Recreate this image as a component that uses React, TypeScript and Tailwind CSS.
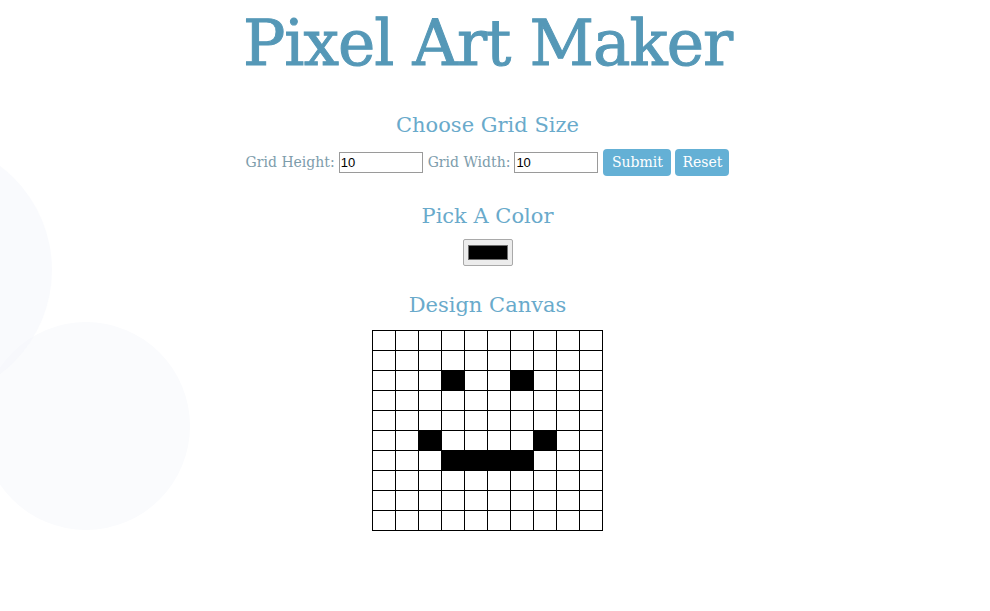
import { useState } from "react";

const ROWS = 10;
const COLS = 10;
const FILLED = new Set(["2-3", "2-6", "5-2", "5-7", "6-3", "6-4", "6-5", "6-6"]);

export default function App() {
  const [color, setColor] = useState("#000000");
  const [cells, setCells] = useState<Set<string>>(FILLED);

  const paint = (key: string) => {
    const next = new Set(cells);
    next.add(key);
    setCells(next);
  };

  return (
    <div className="relative h-[611px] w-[975px] overflow-hidden bg-white font-['DejaVu_Serif',serif]">
      {/* faint background blobs */}
      <div className="absolute left-[-18px] top-[322px] h-[208px] w-[208px] rounded-full bg-[#fafbfd]" />
      <div className="absolute left-[-208px] top-[140px] h-[260px] w-[260px] rounded-full bg-[#f4f6fb] opacity-50" />

      <div className="relative flex flex-col items-center">
        <h1 className="mt-[4px] text-[63px] leading-[80px] tracking-[-1px] text-[#5598b7] [-webkit-text-stroke:1px_#5598b7]">
          Pixel Art Maker
        </h1>

        <h2 className="mt-[26px] text-[21px] leading-[30px] text-[#69aacb]">Choose Grid Size</h2>
        <form className="mt-[9px] flex items-center text-[14px] text-[#7d9cab]" onSubmit={(e) => e.preventDefault()}>
          <label className="mr-[4px]">Grid Height:</label>
          <input
            defaultValue="10"
            className="h-[21px] w-[84px] border border-[#9a9a9a] px-[1px] font-['Liberation_Sans',sans-serif] text-[13px] text-black"
          />
          <label className="ml-[5px] mr-[4px]">Grid Width:</label>
          <input
            defaultValue="10"
            className="h-[21px] w-[84px] border border-[#9a9a9a] px-[1px] font-['Liberation_Sans',sans-serif] text-[13px] text-black"
          />
          <button className="ml-[5px] h-[27px] w-[68px] rounded-[4px] bg-[#64b0d5] text-[14px] text-white">Submit</button>
          <button type="reset" className="ml-[4px] h-[27px] w-[54px] rounded-[4px] bg-[#64b0d5] text-[14px] text-white">Reset</button>
        </form>

        <h2 className="mt-[25px] text-[21px] leading-[30px] text-[#69aacb]">Pick A Color</h2>
        <label className="mt-[8px] flex h-[27px] w-[50px] items-center justify-center rounded-[2px] border border-[#a9a9a9] bg-[#ececec]">
          <span className="h-[15px] w-[40px] border border-[#6f6f6f]" style={{ backgroundColor: color }} />
          <input type="color" value={color} onChange={(e) => setColor(e.target.value)} className="hidden" />
        </label>

        <h2 className="mt-[24px] text-[21px] leading-[30px] text-[#69aacb]">Design Canvas</h2>
        <table className="mt-[10px] border-collapse border border-black">
          <tbody>
            {Array.from({ length: ROWS }).map((_, r) => (
              <tr key={r}>
                {Array.from({ length: COLS }).map((_, c) => {
                  const key = `${r}-${c}`;
                  return (
                    <td
                      key={key}
                      onClick={() => paint(key)}
                      className={`h-[20px] w-[23px] border border-black p-0 ${cells.has(key) ? "bg-black" : "bg-white"}`}
                    />
                  );
                })}
              </tr>
            ))}
          </tbody>
        </table>
      </div>
    </div>
  );
}
